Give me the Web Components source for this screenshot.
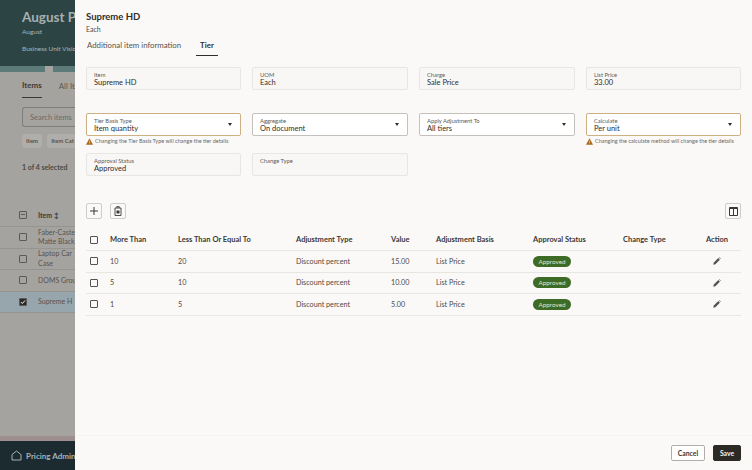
<!DOCTYPE html>
<html lang="en">
<head>
<meta charset="utf-8">
<title>Supreme HD tier</title>
<style>
	html, body { margin: 0; height: 100%; }
	body { font-family: Lato, "Liberation Sans", sans-serif; overflow: hidden; background: #a5a3a0; }
</style>
</head>
<body>
<pricing-page>
	<side-drawer heading="Supreme HD" sub="Each">
		<drawer-tabs slot="tabs"></drawer-tabs>
		<field-grid>
			<form-field label="Item" value="Supreme HD"></form-field>
			<form-field label="UOM" value="Each"></form-field>
			<form-field label="Charge" value="Sale Price"></form-field>
			<form-field label="List Price" value="33.00"></form-field>

			<form-field select warn="Changing the Tier Basis Type will change the tier details" label="Tier Basis Type" value="Item quantity"></form-field>
			<form-field select label="Aggregate" value="On document"></form-field>
			<form-field select label="Apply Adjustment To" value="All tiers"></form-field>
			<form-field select warn="Changing the calculate method will change the tier details" label="Calculate" value="Per unit"></form-field>

			<form-field label="Approval Status" value="Approved"></form-field>
			<form-field label="Change Type" value=""></form-field>
		</field-grid>
		<tier-table></tier-table>
	</side-drawer>
</pricing-page>

<script>
const ICONS = {
	plus: `<svg width="10" height="10" viewBox="0 0 10 10"><path d="M5 1v8M1 5h8" stroke="#3a3836" stroke-width="1" fill="none"/></svg>`,
	trash: `<svg width="8" height="10" viewBox="0 0 8 10" fill="none" stroke="#3a3836" stroke-width=".9"><path d="M1 2h6v7.500H1zM2.800 2V.6h2.400V2"/><path d="M2.500 4.500h3v3h-3z" fill="#3a3836" stroke="none"/></svg>`,
	columns: `<svg width="9" height="9" viewBox="0 0 9 9" fill="none" stroke="#3a3836" stroke-width="1"><path d="M.5.500h8v8h-8zM4.500.5v8M.5 1.500h8"/></svg>`,
	pencil: `<svg width="8" height="8" viewBox="0 0 8 8"><path d="M0.300 7.700l.5-2.100L5.300 1.100l1.600 1.600L2.400 7.200z" fill="#55524f"/><path d="M5.900.5l.5-.3 1.400 1.400-.3.500z" fill="#55524f"/></svg>`,
	warn: `<svg width="7" height="7" viewBox="0 0 8 8"><path d="M4 .3L8 7.700H0z" fill="#a9691f"/><path d="M4 3v2.300M4 5.900v.7" stroke="#f4e8d8" stroke-width=".7"/></svg>`,
	home: `<svg width="11" height="11" viewBox="0 0 11 11" fill="none" stroke="#a9b1b3" stroke-width="1"><path d="M1 4.600L5.500 1 10 4.600V10H1z"/></svg>`
};

class PricingPage extends HTMLElement {
	constructor() {
		super();
		this.attachShadow({mode: 'open'});
	}

	connectedCallback() {
		this.shadowRoot.innerHTML = `
			<style>
				:host { display: flex; flex-direction: column; position: relative; width: 752px; height: 470px; overflow: hidden; background: #a5a3a0; color: #3c3a38; }
				.head { height: 66px; box-sizing: border-box; padding: 7px 0 0 22px; background: #2d4445; color: #a9b3b3; flex: none; }
				.head h1 { margin: 0; font-size: 13.500px; line-height: 20px; font-weight: 700; color: #a6b0b0; white-space: nowrap; }
				.head p { margin: 0; font-size: 6.500px; line-height: 10px; white-space: nowrap; }
				.head .bu { margin-top: 7px; }
				.strip { height: 6px; flex: none; background: linear-gradient(90deg, #5c7a78 0 6%, #a5a3a0 6% 7%, #5c7a78 7% 22%, #8f7a5c 22% 25%, #5c7a78 25% 34%, #7f9a98 34% 60%, #5c7a78 60%); }
				main { flex: 1; padding-left: 22px; font-size: 8px; }
				.tabs { display: flex; gap: 17px; padding-top: 7px; height: 24px; font-size: 8px; color: #4b4946; font-weight: 700; }
				.tabs span { height: 16px; padding-top: 2px; }
				.tabs .on { border-bottom: 1.500px solid #3c3a38; color: #3c3a38; height: 17px; padding-top: 1px; }
				.tabs .off { font-weight: 400; color: #5c5a57; white-space: nowrap; }
				.search { margin-top: 4px; height: 20px; box-sizing: border-box; padding: 5px 7px; border: 1px solid #807e7b; border-right: 0; border-radius: 3px 0 0 3px; font-size: 7.500px; color: #6c6a67; white-space: nowrap; }
				.chips { display: flex; gap: 5px; margin-top: 7px; }
				.chips span { padding: 3px 4px; font-size: 6px; line-height: 8px; font-weight: 700; background: #b0aeab; border-radius: 3px; color: #55534f; white-space: nowrap; }
				.count { margin-top: 15px; font-size: 7px; font-weight: 700; color: #4b4946; white-space: nowrap; }
				.th, .tr { display: flex; align-items: center; gap: 11px; margin-left: -22px; padding-left: 19px; border-bottom: 1px solid #969491; box-sizing: border-box; }
				.th { margin-top: 32px; height: 24px; font-weight: 700; font-size: 7px; }
				.tr { height: 21.500px; font-size: 7px; line-height: 9.500px; color: #55534f; white-space: nowrap; }
				.tr.sel { background: #97a6ac; }
				.box { width: 6px; height: 6px; flex: none; border: 1px solid #5c5a57; border-radius: 1px; box-sizing: content-box; }
				.box.mid { background: linear-gradient(#5c5a57,#5c5a57) center/4px 1px no-repeat; }
				.box.chk { background: #2d2b29; display: flex; }
				.box.chk svg { display: block; }
				.foot { position: absolute; left: 0; right: 0; bottom: 0; height: 34px; border-top: 5px solid #9c8f8d; box-sizing: border-box; background: #1c2b30; color: #a9b1b3; display: flex; align-items: center; gap: 4px; padding-left: 11px; font-size: 8px; font-weight: 700; white-space: nowrap; }
			</style>
			<div class="head">
				<h1>August P</h1>
				<p>August</p>
				<p class="bu">Business Unit Visio</p>
			</div>
			<div class="strip"></div>
			<main>
				<div class="tabs"><span class="on">Items</span><span class="off">All It</span></div>
				<div class="search">Search items</div>
				<div class="chips"><span>Item</span><span>Item Cat</span></div>
				<div class="count">1 of 4 selected</div>
				<div class="th"><i class="box mid"></i>Item &#8597;</div>
				<div class="tr"><i class="box"></i><span>Faber-Caste<br>Matte Black</span></div>
				<div class="tr"><i class="box"></i><span>Laptop Car<br>Case</span></div>
				<div class="tr"><i class="box"></i><span>DOMS Grou</span></div>
				<div class="tr sel"><i class="box chk"><svg width="6" height="6" viewBox="0 0 6 6"><path d="M1 3.200l1.300 1.300L5 1.500" stroke="#fff" fill="none"/></svg></i><span>Supreme H</span></div>
			</main>
			<div class="foot">${ICONS.home}<span>Pricing Admini</span></div>
			<slot></slot>
		`;
	}
}

class SideDrawer extends HTMLElement {
	constructor() {
		super();
		this.attachShadow({mode: 'open'});
	}

	connectedCallback() {
		this.shadowRoot.innerHTML = `
			<style>
				:host { display: flex; flex-direction: column; position: absolute; left: 75px; top: 0; width: 677px; height: 470px; box-sizing: border-box; padding: 0 11px; background: #fbf9f8; color: #2f2d2b; }
				h2 { margin: 11px 0 0; font-size: 9.500px; line-height: 12px; font-weight: 700; }
				.sub { font-size: 7px; line-height: 10px; margin-top: 1px; color: #4b4946; }
				.foot { margin: auto -11px 0; display: flex; justify-content: flex-end; gap: 8px; padding: 9px 11px; border-top: 1px solid #f6f4f2; }
				button { font: 700 6.800px Lato, "Liberation Sans", sans-serif; height: 16px; border-radius: 2px; padding: 0; cursor: pointer; }
				.cancel { width: 34px; background: #fff; border: 1px solid #b0aeab; color: #3a3836; }
				.save { width: 28px; background: #2d2a26; border: 1px solid #2d2a26; color: #f4f2f0; }
			</style>
			<h2>${this.getAttribute('heading')}</h2>
			<div class="sub">${this.getAttribute('sub')}</div>
			<slot name="tabs"></slot>
			<slot></slot>
			<div class="foot"><button class="cancel">Cancel</button><button class="save">Save</button></div>
		`;
	}
}

class DrawerTabs extends HTMLElement {
	constructor() {
		super();
		this.attachShadow({mode: 'open'});
	}

	connectedCallback() {
		this.shadowRoot.innerHTML = `
			<style>
				:host { display: flex; gap: 14px; margin-top: 3px; height: 30px; font-size: 7.800px; }
				span { padding: 3px 1px 0 1px; height: 18px; box-sizing: border-box; white-space: nowrap; color: #55534f; }
				.on { color: #2f2d2b; font-weight: 700; border-bottom: 1.500px solid #2f2d2b; padding: 3px 4px 0; height: 19px; }
			</style>
			<span>Additional item information</span>
			<span class="on">Tier</span>
		`;
	}
}

class FieldGrid extends HTMLElement {
	constructor() {
		super();
		this.attachShadow({mode: 'open'});
	}

	connectedCallback() {
		this.shadowRoot.innerHTML = `
			<style>
				:host { display: grid; grid-template-columns: 155px 156px 156px 155px; column-gap: 11px; grid-template-rows: 23px 46px 40px; align-items: end; }
			</style>
			<slot></slot>
		`;
	}
}

class FormField extends HTMLElement {
	constructor() {
		super();
		this.attachShadow({mode: 'open'});
	}

	connectedCallback() {
		const select = this.hasAttribute('select');
		const warn = this.getAttribute('warn');
		this.shadowRoot.innerHTML = `
			<style>
				:host { display: block; position: relative; font-size: 7.500px; }
				.box { height: 23px; box-sizing: border-box; padding: 3px 7px 0; border: 1px solid #e8e6e3; border-radius: 2px; background: #f9f7f5; position: relative; }
				.select { background: #fff; border-color: #c4c1bd; }
				.warned { border-color: #cdb083; }
				label { display: block; font-size: 5.800px; line-height: 7px; color: #5c5a57; white-space: nowrap; }
				.val { line-height: 10px; color: #2f2d2b; white-space: nowrap; margin-top: -0.500px; }
				.caret { position: absolute; right: 8px; top: 9px; border: 2.500px solid transparent; border-top: 3px solid #2f2d2b; border-bottom: 0; width: 0; height: 0; }
				.msg { display: flex; align-items: center; gap: 2px; position: absolute; left: 0; top: 24px; font-size: 5.500px; line-height: 9px; color: #6a6865; white-space: nowrap; }
				svg { flex: none; }
			</style>
			<div class="box ${select ? 'select' : ''} ${warn ? 'warned' : ''}">
				<label>${this.getAttribute('label')}</label>
				<div class="val">${this.getAttribute('value') || '&nbsp;'}</div>
				${select ? '<i class="caret"></i>' : ''}
			</div>
			${warn ? `<div class="msg">${ICONS.warn}<span>${warn}</span></div>` : ''}
		`;
	}
}

class TierTable extends HTMLElement {
	constructor() {
		super();
		this.attachShadow({mode: 'open'});
	}

	connectedCallback() {
		const rows = [['10', '20', '15.00'], ['5', '10', '10.00'], ['1', '5', '5.00']];
		const edit = `<span class="act">${ICONS.pencil}</span>`;
		this.shadowRoot.innerHTML = `
			<style>
				:host { display: block; margin-top: 27px; }
				.bar { display: flex; gap: 8px; height: 15px; }
				.bar button { width: 16px; height: 16px; padding: 0; display: flex; align-items: center; justify-content: center; background: #fbf9f8; border: 1px solid #cfcdca; border-radius: 2px; }
				.bar button:last-child { margin-left: auto; }
				.row { display: grid; grid-template-columns: 24px 68px 118px 95px 45px 97px 90px 83px 35px; align-items: center; height: 21.500px; box-sizing: border-box; font-size: 7.200px; color: #4b4946; border-bottom: 1px solid #e8e6e3; white-space: nowrap; }
				.head { height: 22px; margin-top: 11px; color: #3a3836; }
				.head span { font-weight: 700; font-size: 7.500px; }
				i { width: 6px; height: 6px; margin-left: 4px; border: 1px solid #55534f; border-radius: 1px; display: block; }
				.pill { display: inline-block; width: 38px; height: 11px; line-height: 11px; text-align: center; border-radius: 6px; background: #3e6b25; color: #dfe8d6; font-size: 6.300px; font-weight: 400; }
				.act { display: flex; padding-left: 7px; }
			</style>
			<div class="bar">
				<button>${ICONS.plus}</button>
				<button>${ICONS.trash}</button>
				<button>${ICONS.columns}</button>
			</div>
			<div class="row head">
				<i></i><span>More Than</span><span>Less Than Or Equal To</span><span>Adjustment Type</span><span>Value</span><span>Adjustment Basis</span><span>Approval Status</span><span>Change Type</span><span>Action</span>
			</div>
			${rows.map(r => `
				<div class="row">
					<i></i><span>${r[0]}</span><span>${r[1]}</span><span>Discount percent</span><span>${r[2]}</span><span>List Price</span><span><b class="pill">Approved</b></span><span></span>${edit}
				</div>`).join('')}
		`;
	}
}

customElements.define('pricing-page', PricingPage);
customElements.define('side-drawer', SideDrawer);
customElements.define('drawer-tabs', DrawerTabs);
customElements.define('field-grid', FieldGrid);
customElements.define('form-field', FormField);
customElements.define('tier-table', TierTable);
</script>
</body>
</html>
